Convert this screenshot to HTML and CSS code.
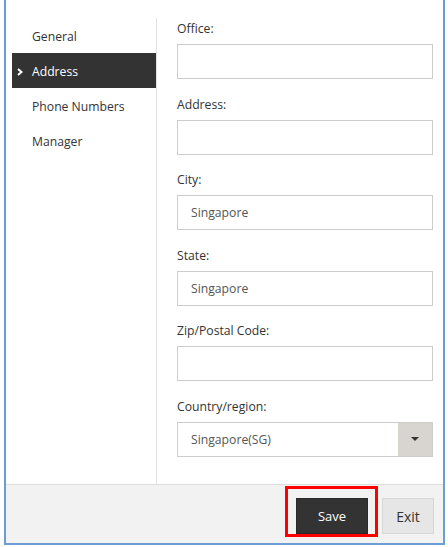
FILE: index.html
```html
<!DOCTYPE html>
<html>
<head>
<meta charset="utf-8">
<link rel="stylesheet" href="styles.css">
</head>
<body>
<div class="window">
  <div class="main">
    <nav class="sidebar">
      <div class="nav-item">General</div>
      <div class="nav-item active"><svg class="chev" width="6" height="8" viewBox="0 0 6 8"><polyline points="1,1 4.5,4 1,7" fill="none" stroke="#ffffff" stroke-width="2"/></svg>Address</div>
      <div class="nav-item">Phone Numbers</div>
      <div class="nav-item">Manager</div>
    </nav>
    <form class="form">
      <div class="group">
        <label class="label">Office:</label>
        <div class="input"></div>
      </div>
      <div class="group">
        <label class="label">Address:</label>
        <div class="input"></div>
      </div>
      <div class="group">
        <label class="label">City:</label>
        <div class="input">Singapore</div>
      </div>
      <div class="group">
        <label class="label">State:</label>
        <div class="input">Singapore</div>
      </div>
      <div class="group">
        <label class="label">Zip/Postal Code:</label>
        <div class="input"></div>
      </div>
      <div class="group">
        <label class="label">Country/region:</label>
        <div class="select">
          <div class="select-value">Singapore(SG)</div>
          <div class="select-btn"><span class="caret"></span></div>
        </div>
      </div>
    </form>
  </div>
  <div class="footer">
    <div class="highlight"><button class="btn btn-save" type="button">Save</button></div>
    <button class="btn btn-exit" type="button">Exit</button>
  </div>
</div>
</body>
</html>
```
FILE: styles.css
```css
html, body {
  margin: 0;
  padding: 0;
  background: #ffffff;
}
body {
  font-family: "Open Sans", "Noto Sans", sans-serif;
  font-size: 12.2px;
  color: #333333;
}
.window {
  margin-left: 4px;
  width: 437px;
  height: 543px;
  border-left: 2px solid #6d9bd6;
  border-right: 2px solid #6d9bd6;
  border-bottom: 2px solid #6d9bd6;
  display: flex;
  flex-direction: column;
}
.main {
  height: 484px;
  display: flex;
}
.sidebar {
  width: 144px;
  margin-top: 18px;
  padding-left: 6px;
  border-right: 1px solid #e2e2e2;
  display: flex;
  flex-direction: column;
}
.nav-item {
  height: 35px;
  box-sizing: border-box;
  padding-top: 1px;
  line-height: 35px;
  padding-left: 20px;
  color: #333333;
  position: relative;
}
.nav-item.active {
  background: #333333;
  color: #ffffff;
}
.chev {
  position: absolute;
  left: 5px;
  top: 15px;
}
.form {
  flex: 1;
  padding: 19px 10px 0 20px;
  display: flex;
  flex-direction: column;
  gap: 15.6px;
}
.group {
  display: flex;
  flex-direction: column;
}
.label {
  height: 18px;
  line-height: 18px;
  padding-top: 1px;
  margin-bottom: 6px;
  color: #333333;
}
.input {
  height: 35px;
  box-sizing: border-box;
  border: 1px solid #cccccc;
  padding-left: 13px;
  line-height: 33px;
  color: #555555;
}
.select {
  height: 35px;
  box-sizing: border-box;
  border: 1px solid #cccccc;
  display: flex;
}
.select-value {
  flex: 1;
  padding-left: 13px;
  line-height: 33px;
  color: #555555;
}
.select-btn {
  width: 34px;
  background: #d8d5d0;
  display: flex;
  align-items: center;
  justify-content: center;
}
.caret {
  width: 0;
  height: 0;
  border-left: 4px solid transparent;
  border-right: 4px solid transparent;
  border-top: 4px solid #333333;
}
.footer {
  flex: 1;
  background: #f2f2f2;
  border-top: 1px solid #dddddd;
  display: flex;
  justify-content: flex-end;
  align-items: flex-end;
  padding: 0 9px 6px 0;
}
.highlight {
  border: 3px solid #ff0000;
  padding: 9px 7px 0 8px;
  display: flex;
}
.btn {
  font-family: "Open Sans", "Noto Sans", sans-serif;
  font-size: 13px;
  height: 36px;
  margin: 0;
  border-radius: 0;
  cursor: pointer;
}
.btn-save {
  width: 72px;
  background: #333333;
  color: #ffffff;
  border: 1px solid #2a2a2a;
}
.btn-exit {
  width: 52px;
  margin-left: 4px;
  margin-bottom: 3px;
  background: #e6e6e6;
  color: #333333;
  border: 1px solid #d6d6d6;
  font-size: 14px;
}
```
